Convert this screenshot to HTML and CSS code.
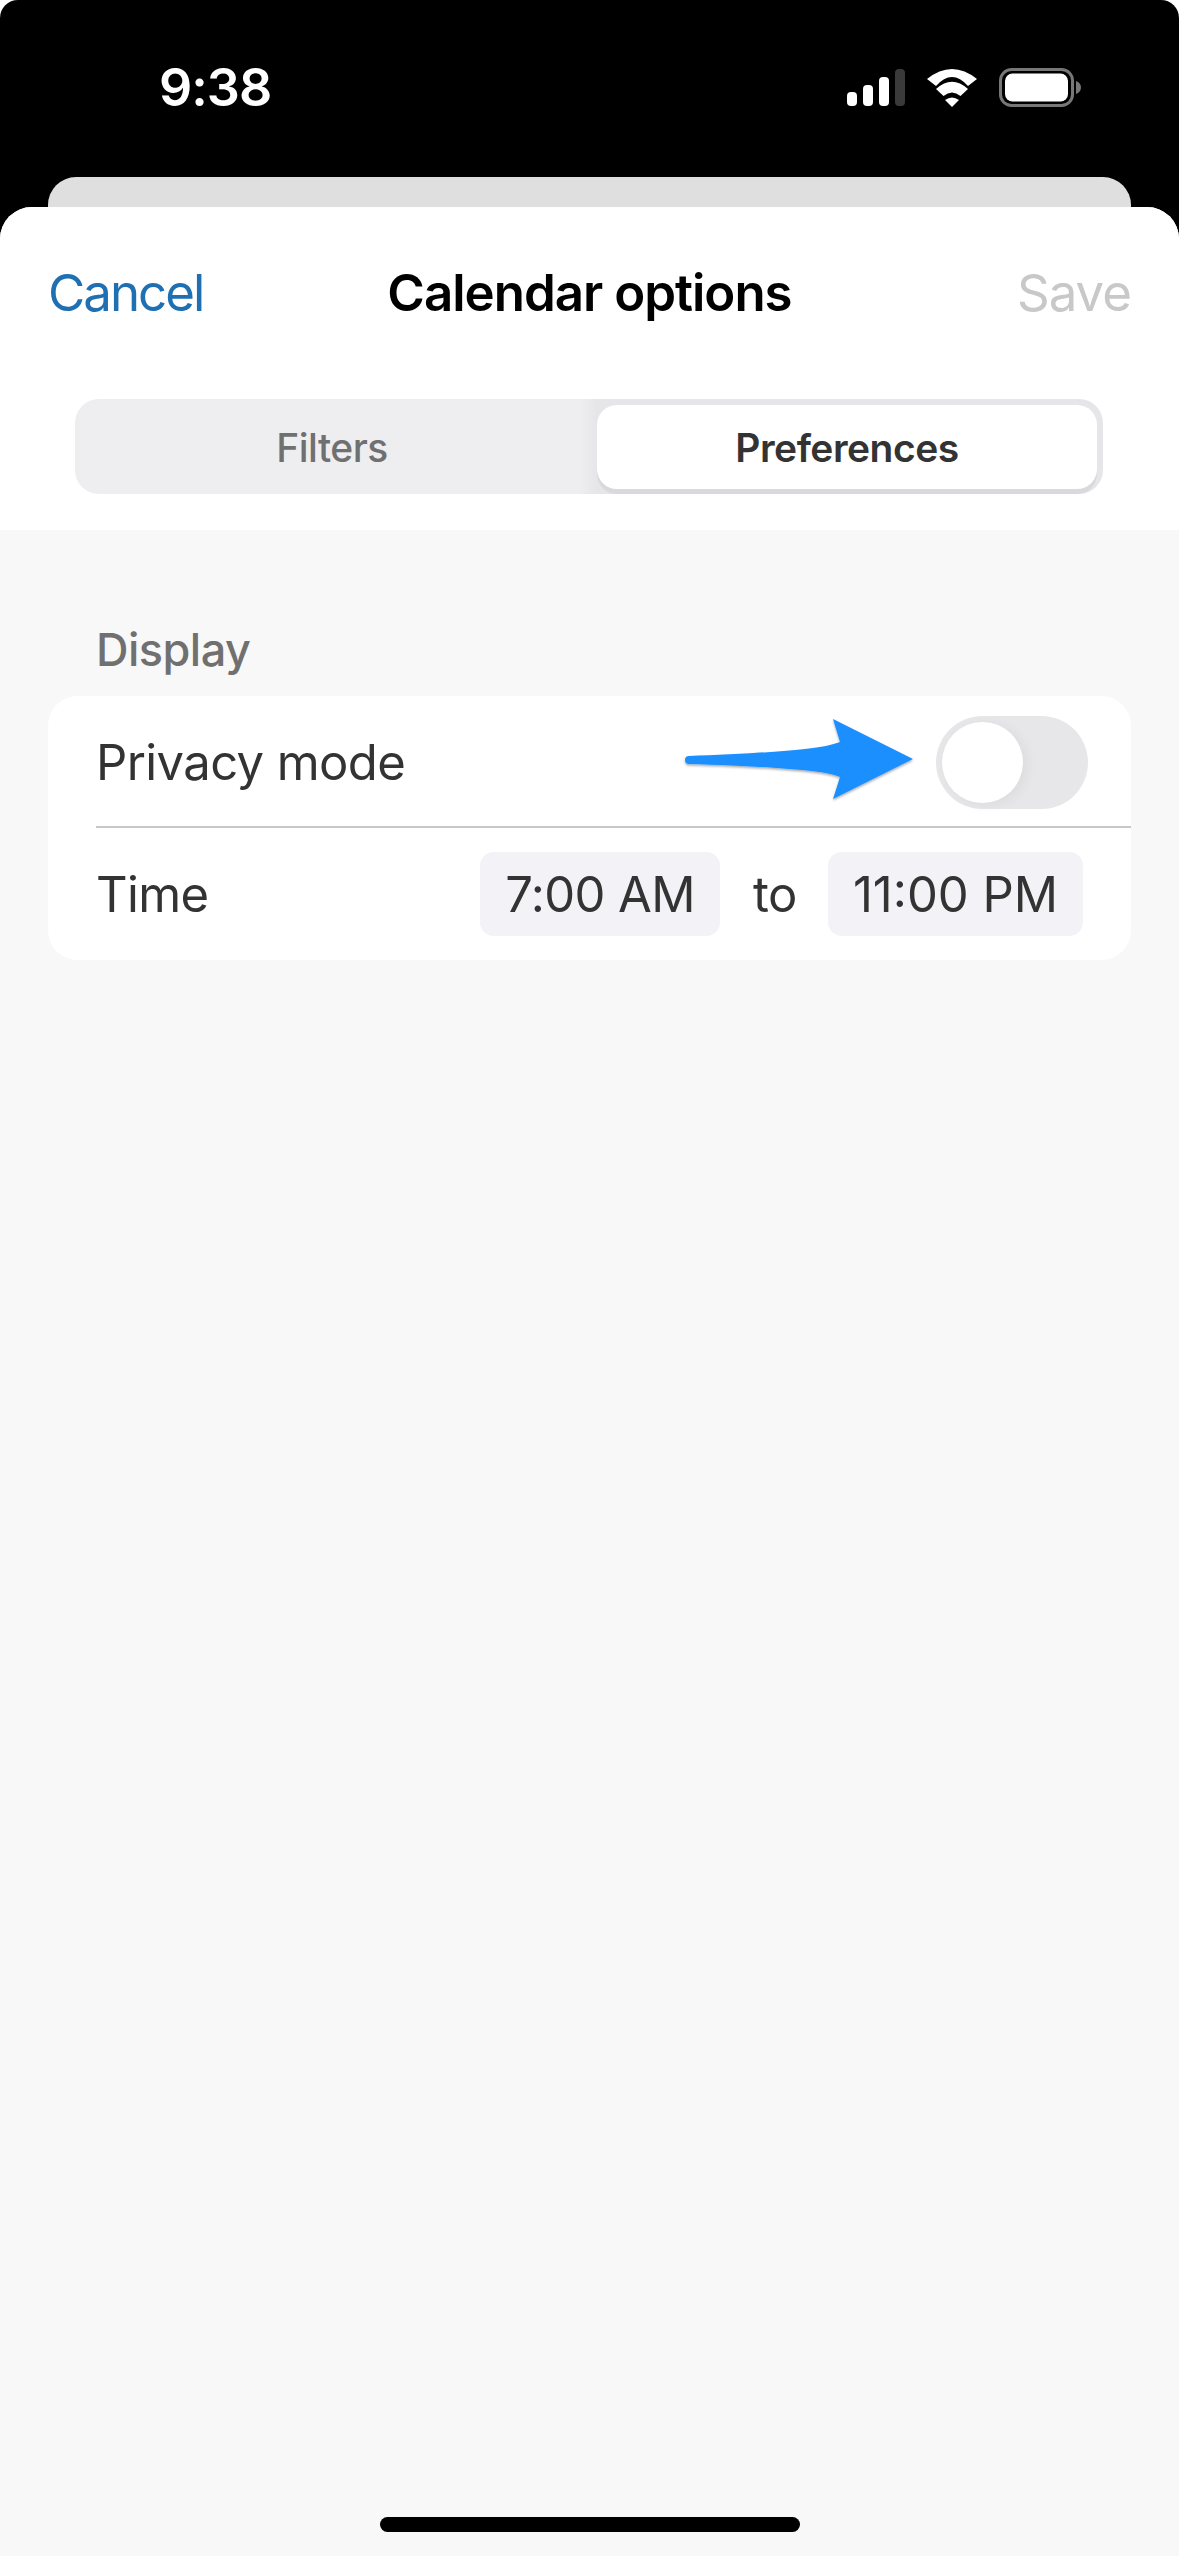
FILE: index.html
```html
<!DOCTYPE html>
<html lang="en">
<head>
<meta charset="utf-8">
<title>Calendar options</title>
<link rel="stylesheet" href="styles.css">
</head>
<body>
<div class="phone">
  <header class="status">
    <span class="clock">9:38</span>
    <div class="status-icons">
      <svg class="signal" width="58" height="37" viewBox="0 0 58 37"><rect x="0" y="23" width="10" height="14" rx="4" fill="#fff"/><rect x="16" y="16" width="10" height="21" rx="4" fill="#fff"/><rect x="32" y="8" width="10" height="29" rx="4" fill="#fff"/><rect x="48" y="0" width="10" height="37" rx="4" fill="#3a3a3a"/></svg>
      <svg class="wifi" width="50" height="38" viewBox="0 0 50 38"><path d="M0 10Q25 -10 50 10L41 17Q25 -1 9 17Z" fill="#fff"/><path d="M9 20Q25 5.500 41 20L33.500 27Q25 20 16.500 27Z" fill="#fff"/><path d="M18 31Q25 26 32 31L25 38Z" fill="#fff"/></svg>
      <svg class="battery" width="82" height="39" viewBox="0 0 82 39"><rect x="1.500" y="1.500" width="72" height="36" rx="11" fill="none" stroke="#777" stroke-width="3"/><rect x="6" y="5.500" width="63" height="28" rx="7.500" fill="#fff"/><path d="M77 13C80 14 82 16.500 82 19.500S80 25 77 26Z" fill="#777"/></svg>
    </div>
  </header>
  <div class="back-card"></div>
  <main class="sheet">
    <div class="sheet-head">
      <nav class="navbar">
        <span class="nav-cancel">Cancel</span>
        <h1 class="nav-title">Calendar options</h1>
        <span class="nav-save">Save</span>
      </nav>
      <div class="segments">
        <span class="seg seg-off">Filters</span>
        <span class="seg seg-on">Preferences</span>
      </div>
    </div>
    <section class="content">
      <h2 class="section-label">Display</h2>
      <div class="card">
        <div class="row row-privacy">
          <span class="row-label">Privacy mode</span>
          <div class="toggle"><span class="knob"></span></div>
          <svg class="arrow" width="240" height="100" viewBox="0 0 240 100"><defs><filter id="arrowShadow" x="-5%" y="-5%" width="110%" height="120%"><feDropShadow dx="0" dy="1.500" stdDeviation="1.200" flood-color="#000" flood-opacity=".35"/></filter></defs><path d="M9 46C50 44.500 100 42 125 39C142 37 152 35 160 32L153 9L233 49L153 89L160 67C150 63 135 61 115 59.500C85 57 50 55 9 54A4 4 0 0 1 9 46Z" fill="#1c8fff" filter="url(#arrowShadow)"/></svg>
        </div>
        <div class="row row-time">
          <span class="row-label">Time</span>
          <div class="time-range">
            <span class="chip chip-start">7:00 AM</span>
            <span class="to">to</span>
            <span class="chip chip-end">11:00 PM</span>
          </div>
        </div>
      </div>
    </section>
    <div class="home-indicator"></div>
  </main>
</div>
</body>
</html>
```
FILE: styles.css
```css
* { box-sizing: border-box; }
html, body { margin: 0; padding: 0; background: #fff; }
body { width: 1179px; height: 2556px; overflow: hidden; font-family: Inter, "Liberation Sans", sans-serif; }
.phone { height: 2556px; display: flex; flex-direction: column; background: #000; border-radius: 18px 18px 0 0; }
.status { height: 177px; flex: none; display: flex; justify-content: space-between; align-items: flex-start; padding: 58px 98px 0 159px; }
.clock { color: #fff; font-size: 52px; line-height: 60px; font-weight: 600; letter-spacing: -1px; }
.status-icons { display: flex; align-items: center; gap: 22px; padding-top: 10px; }
.status-icons svg { display: block; }
.back-card { flex: none; height: 30px; margin: 0 48px; background: #dfdfdf; border-radius: 28px 28px 0 0; }
.sheet { flex: 1; display: flex; flex-direction: column; background: #f8f8f9; border-radius: 32px 32px 0 0; overflow: hidden; }
.sheet-head { flex: none; height: 323px; background: #fff; display: flex; flex-direction: column; }
.navbar { height: 170px; flex: none; display: grid; grid-template-columns: 1fr auto 1fr; align-items: center; padding: 0 48px; }
.nav-cancel { color: #1f70b3; font-size: 51px; letter-spacing: -2px; }
.nav-title { margin: 0; color: #000; font-size: 51px; font-weight: 600; letter-spacing: -1px; }
.nav-save { justify-self: end; color: #c8c8c8; font-size: 51px; letter-spacing: -1px; }
.segments { flex: none; margin: 22px 76px 0 75px; height: 95px; padding: 6px 6px 5px 0; display: grid; grid-template-columns: 1fr 500px; background: linear-gradient(90deg, #eeeef0 505px, #e6e6e8 522px); border-radius: 24px; overflow: hidden; }
.seg { display: flex; align-items: center; justify-content: center; color: #707070; font-size: 39px; font-weight: 500; letter-spacing: -.5px; }
.seg-off { padding-right: 8px; }
.seg-on { background: #fff; color: #333; font-weight: 600; border-radius: 20px; box-shadow: 0 5px 0 #d9d9dd; }
.content { flex: none; padding: 94px 48px 0; }
.section-label { margin: 0 0 20px 48px; color: #707070; font-size: 45px; line-height: 52px; font-weight: 500; letter-spacing: -.5px; }
.card { background: #fff; border-radius: 30px; }
.row { display: flex; align-items: center; justify-content: space-between; margin-left: 48px; }
.row-label { color: #333; font-size: 49px; letter-spacing: -.6px; }
.row-privacy { position: relative; height: 132px; padding: 3px 43px 0 0; border-bottom: 2px solid #c8c8ca; }
.toggle { width: 152px; height: 93px; border-radius: 47px; background: #e7e7e9; padding: 6px; }
.knob { display: block; width: 81px; height: 81px; border-radius: 50%; background: #fff; box-shadow: 4px 2px 14px rgba(0,0,0,.05); }
.arrow { position: absolute; left: 584px; top: 14px; }
.row-time { height: 132px; padding-right: 48px; }
.time-range { display: flex; align-items: center; gap: 33px; }
.chip { display: flex; align-items: center; justify-content: center; height: 84px; background: #f2f2f7; border-radius: 14px; color: #333; font-size: 49px; letter-spacing: -.6px; }
.chip-start { width: 240px; }
.chip-end { width: 255px; letter-spacing: 0; }
.to { width: 42px; text-align: center; color: #333; font-size: 49px; letter-spacing: -.6px; }
.home-indicator { flex: none; width: 420px; height: 15px; margin: auto auto 24px; border-radius: 8px; background: #000; }
```
